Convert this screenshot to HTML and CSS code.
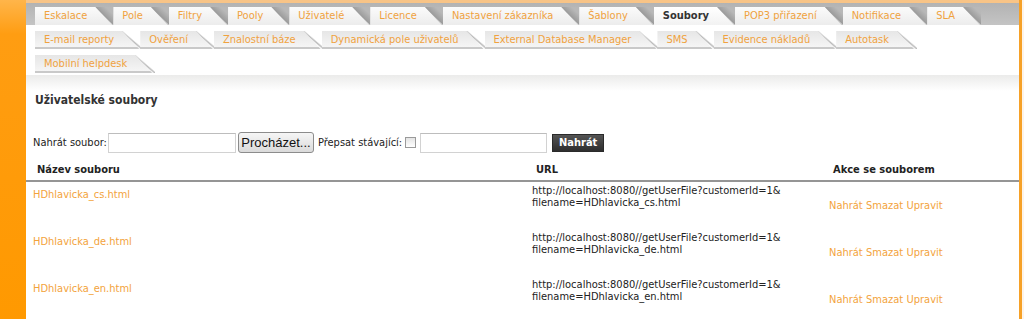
FILE: index.html
```html
<!DOCTYPE html>
<html lang="cs">
<head>
<meta charset="utf-8">
<title>Uživatelské soubory</title>
<link rel="stylesheet" href="styles.css">
</head>
<body>
<div class="page">
  <aside class="side"></aside>
  <main class="main">
    <div class="top-strip"></div>
    <nav class="tabs">
      <div class="row row1">
        <a class="tab" href="#">Eskalace</a>
        <a class="tab" href="#">Pole</a>
        <a class="tab" href="#">Filtry</a>
        <a class="tab" href="#">Pooly</a>
        <a class="tab" href="#">Uživatelé</a>
        <a class="tab" href="#">Licence</a>
        <a class="tab" href="#">Nastavení zákazníka</a>
        <a class="tab" href="#">Šablony</a>
        <a class="tab active" href="#">Soubory</a>
        <a class="tab" href="#">POP3 přiřazení</a>
        <a class="tab" href="#">Notifikace</a>
        <a class="tab" href="#">SLA</a>
      </div>
      <div class="row row2">
        <a class="tab" href="#">E-mail reporty</a>
        <a class="tab" href="#">Ověření</a>
        <a class="tab" href="#">Znalostní báze</a>
        <a class="tab" href="#">Dynamická pole uživatelů</a>
        <a class="tab" href="#">External Database Manager</a>
        <a class="tab" href="#">SMS</a>
        <a class="tab" href="#">Evidence nákladů</a>
        <a class="tab" href="#">Autotask</a>
      </div>
      <div class="row row2">
        <a class="tab" href="#">Mobilní helpdesk</a>
      </div>
    </nav>
    <section class="content">
      <h1 class="title">Uživatelské soubory</h1>
      <form class="upload">
        <label class="lbl">Nahrát soubor:</label>
        <input class="field" type="text">
        <button class="browse" type="button">Procházet...</button>
        <label class="lbl lbl-over">Přepsat stávající:</label>
        <input class="check" type="checkbox">
        <input class="field field2" type="text">
        <button class="submit" type="button">Nahrát</button>
      </form>
      <div class="table">
        <div class="th">Název souboru</div>
        <div class="th">URL</div>
        <div class="th th-act">Akce se souborem</div>

        <div class="td td-name"><a href="#">HDhlavicka_cs.html</a></div>
        <div class="td td-url">http://localhost:8080//getUserFile?customerId=1&amp;<br>filename=HDhlavicka_cs.html</div>
        <div class="td td-act"><a href="#">Nahrát</a> <a href="#">Smazat</a> <a href="#">Upravit</a></div>

        <div class="td td-name"><a href="#">HDhlavicka_de.html</a></div>
        <div class="td td-url">http://localhost:8080//getUserFile?customerId=1&amp;<br>filename=HDhlavicka_de.html</div>
        <div class="td td-act"><a href="#">Nahrát</a> <a href="#">Smazat</a> <a href="#">Upravit</a></div>

        <div class="td td-name"><a href="#">HDhlavicka_en.html</a></div>
        <div class="td td-url">http://localhost:8080//getUserFile?customerId=1&amp;<br>filename=HDhlavicka_en.html</div>
        <div class="td td-act"><a href="#">Nahrát</a> <a href="#">Smazat</a> <a href="#">Upravit</a></div>
      </div>
    </section>
  </main>
  <div class="edge"></div>
</div>
</body>
</html>
```

FILE: styles.css
```css
* { box-sizing: border-box; }
html, body { margin: 0; padding: 0; background: #fff; }
body {
  font-family: "DejaVu Sans Condensed", "DejaVu Sans", sans-serif;
  font-size: 11px;
  color: #222;
  overflow: hidden;
}
a { color: #f3a33c; text-decoration: none; }

.page { display: flex; min-height: 319px; }
.side {
  width: 26px;
  flex: none;
  background: linear-gradient(#ffb54a, #ff9d12 34px, #ff9900);
}
.main {
  flex: 1;
  min-width: 0;
  border-right: 3px solid #f6a128;
}
.edge { width: 2px; flex: none; background: #fdf4ea; }

.top-strip { height: 3px; background: #f8c487; }

.row { display: flex; padding-left: 9px; }
.row1 {
  height: 22px;
  padding-top: 4px;
  background: linear-gradient(#b3b3b3, #c4c4c4);
}
.row2 { margin-top: 6px; }

.tab {
  position: relative;
  isolation: isolate;
  display: block;
  height: 18px;
  line-height: 18px;
  padding: 0 26px 0 9px;
  color: #f0a23e;
  white-space: nowrap;
}
.tab::before {
  content: "";
  position: absolute;
  inset: 0 1px 0 0;
  z-index: -1;
  clip-path: polygon(0 0, calc(100% - 17px) 0, 100% 100%, 0 100%);
}
.tab::after {
  content: "";
  position: absolute;
  top: 0;
  bottom: 0;
  right: 0;
  width: 19px;
  z-index: -2;
}
.row1 .tab::before { background: linear-gradient(#fbfbfb, #ececec); }
.row1 .tab::after {
  background: linear-gradient(to top right, transparent 50%, #9b9b9b 52%, #b8b8b8 80%);
}
.row1 .tab.active { color: #333; font-weight: bold; }
.row1 .tab.active::before { background: linear-gradient(#ffffff, #f2f2f2); }

.row2 .tab::before {
  background: linear-gradient(#e6e6e6, #f5f5f5 calc(100% - 2px), #c9c9c9 calc(100% - 2px));
}
.row2 .tab::after {
  right: -2px;
  width: 21px;
  background: linear-gradient(to top right, transparent calc(50% - 1.5px), #b9b9b9 50%, transparent calc(50% + 1.5px));
}

.content {
  margin-top: 2px;
  padding: 18px 0 0;
  background: linear-gradient(#ebebea, #ffffff 16px);
}
.title {
  margin: 0 0 25px;
  padding-left: 9px;
  font-size: 12px;
  line-height: 14px;
  font-weight: bold;
  color: #333;
}

.upload {
  display: flex;
  align-items: center;
  height: 21px;
  padding-left: 7px;
  margin: 0;
}
.lbl { color: #222; }
.field {
  width: 128px;
  height: 20px;
  margin: 0 0 0 1px;
  border: 1px solid #d2d2d2;
  border-top-color: #bdbdbd;
  background: #fff;
  padding: 0;
}
.browse {
  width: 76px;
  height: 21px;
  margin-left: 2px;
  padding: 0;
  border: 1px solid #8c8c8c;
  border-radius: 3px;
  background: linear-gradient(#f6f6f6, #dadada);
  font-family: "Liberation Sans", Arial, sans-serif;
  font-size: 13px;
  color: #111;
  overflow: hidden;
  white-space: nowrap;
}
.lbl-over { margin-left: 4px; }
.check {
  appearance: none;
  -webkit-appearance: none;
  width: 11px;
  height: 11px;
  margin: 0 0 0 3px;
  border: 1px solid #9a9a9a;
  background: linear-gradient(#e4e4e4, #ffffff);
}
.field2 { width: 127px; margin-left: 4px; }
.submit {
  width: 52px;
  height: 18px;
  margin-left: 5px;
  padding: 0;
  border: 1px solid #2a2a2a;
  background: linear-gradient(#545454, #2e2e2e);
  color: #fff;
  font-family: inherit;
  font-size: 11px;
  font-weight: bold;
}

.table {
  display: grid;
  grid-template-columns: 499px 297px 1fr;
  margin-top: 7px;
}
.th {
  height: 22px;
  line-height: 20px;
  padding-left: 11px;
  border-bottom: 2px solid #959595;
  font-weight: bold;
  color: #222;
}
.th-act { padding-left: 11px; }
.td {
  height: 47px;
  line-height: 12px;
  padding-left: 7px;
}
.td-name { padding-top: 7px; }
.td-url { padding-top: 3px; color: #222; }
.td-act { display: flex; align-items: center; gap: 0.3em; }
```
